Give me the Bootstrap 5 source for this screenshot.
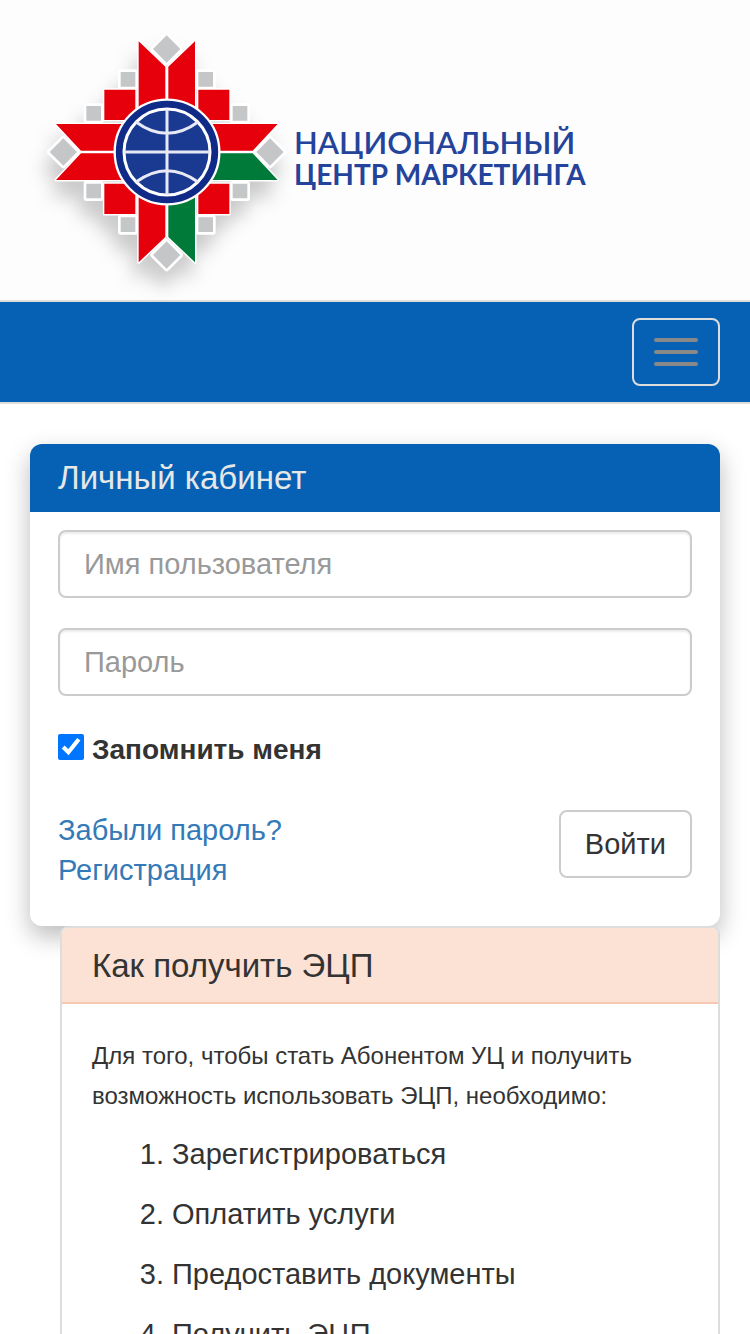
<!DOCTYPE html>
<html lang="ru">
<head>
<meta charset="utf-8">
<meta name="viewport" content="width=device-width, initial-scale=1">
<title>Личный кабинет</title>
<link rel="stylesheet" href="https://cdn.jsdelivr.net/npm/bootstrap@5.3.0/dist/css/bootstrap.min.css">
<style>
body{font-family:"Liberation Sans",Arial,sans-serif;font-size:29px;line-height:40px;color:#333;background:#fff}
a{color:#337ab7;text-decoration:none}
.site-head{background:#fdfdfd;padding:20px 30px 0}
.emblem{width:264px;height:280px;overflow:visible;filter:drop-shadow(-4px 16px 9px rgba(0,0,0,.2))}
.brand-words{font-family:Lato,sans-serif;font-weight:700;font-size:28px;line-height:32px;color:#24449b;margin-top:-4px}
.brand-words .first-line{font-size:31px;font-weight:600}
.site-nav{background:#0661b4;border:solid #ddd;border-width:2px 0;padding:16px 30px}
.site-nav .navbar-toggler{width:88px;height:68px;border:2px solid #ddd;border-radius:8px;padding:0 20px;gap:8px}
.bar{height:4px;border-radius:2px;background:#888}
.main-area{padding:40px 30px 0}
.login{border:0;border-radius:12px;box-shadow:0 10px 24px rgba(0,0,0,.27)}
.login .card-header{background:#0661b4;color:#e7e7e7;border:0;border-radius:12px 12px 0 0;padding:14px 28px}
.title{font-size:33px;line-height:40px;font-weight:400;margin:0}
.login .card-body{padding:18px 28px 36px}
.login .form-control{height:68px;padding:12px 24px;border:2px solid #ccc;border-radius:8px;font-size:29px;line-height:40px;margin-bottom:30px;box-shadow:inset 0 2px 2px rgba(0,0,0,.075)}
.login .form-control::placeholder{color:#999}
.tick{width:26px;height:26px;margin:0 8px 6px 0;accent-color:#0075ff}
.remember{padding:4px 0 40px;font-size:28px}
.enter{height:68px;border:2px solid #ccc;border-radius:8px;padding:0 24px;font-size:29px;line-height:40px;color:#333;background:#fff}
.howto{margin-left:30px;border:2px solid #ddd;border-radius:8px}
.howto .card-header{background:#fce1d5;border-bottom:2px solid #f8c7b2;border-radius:6px 6px 0 0;padding:18px 30px 16px}
.howto .card-body{padding:32px 30px}
.howto p{font-size:24px;margin-bottom:18px}
.howto ol{padding-left:80px}
.howto li{margin-bottom:20px}
</style>
</head>
<body>
<header class="site-head d-flex align-items-start">
  <svg class="emblem flex-shrink-0" viewBox="0 0 792 840" aria-hidden="true">
    <g stroke="#fff" stroke-width="9" stroke-linejoin="round" paint-order="stroke">
      <g fill="#c4c6c8" stroke-width="16">
        <path d="M410 46l41 41-41 41-41-41zM410 664l41 41-41 41-41-41zM100 355l41 41-41 41-41-41zM720 355l41 41-41 41-41-41z"/>
        <path d="M272 156h44v44h-44zM505 156h44v44h-44zM169 258h44v44h-44zM608 258h44v44h-44zM169 491h44v44h-44zM608 491h44v44h-44zM272 592h44v44h-44zM505 592h44v44h-44z"/>
      </g>
      <g fill="#e5000b">
        <path d="M223 209h93v91h-93zM505 209h93v91h-93zM223 491h93v91h-93zM505 491h93v91h-93z"/>
        <path d="M326 64l80 76v200h-80zM495 64l-80 76v200h80zM326 727l80-76V450h-80z"/>
        <path d="M78 312h250v80H153zM78 480h250v-80H153zM743 312H495v80h173z"/>
        <path fill="#007a38" d="M743 480H495v-80h173zM495 727l-80-76V450h80z"/>
      </g>
    </g>
    <circle cx="411" cy="396" r="157" fill="#102b87" stroke="#fff" stroke-width="7"/>
    <circle cx="411" cy="396" r="129" fill="#1a3a92" stroke="#fff" stroke-width="9"/>
    <path d="M411 267v258M282 396h258M318 306q93 68 186 0M318 486q93-68 186 0" fill="none" stroke="#e7eaf5" stroke-width="9"/>
  </svg>
  <div class="brand-words align-self-center text-nowrap"><div class="first-line">НАЦИОНАЛЬНЫЙ</div><div>ЦЕНТР МАРКЕТИНГА</div></div>
</header>
<nav class="site-nav d-flex justify-content-end">
  <button class="navbar-toggler d-flex flex-column justify-content-center align-items-stretch" type="button" aria-label="Меню"><span class="bar"></span><span class="bar"></span><span class="bar"></span></button>
</nav>
<main class="main-area">
  <section class="login card">
    <div class="card-header"><h1 class="title">Личный кабинет</h1></div>
    <form class="card-body">
      <input class="form-control" type="text" placeholder="Имя пользователя" aria-label="Имя пользователя">
      <input class="form-control" type="password" placeholder="Пароль" aria-label="Пароль">
      <div class="remember d-flex align-items-center">
        <input class="tick" type="checkbox" id="remember" checked>
        <label class="fw-bold" for="remember">Запомнить меня</label>
      </div>
      <div class="d-flex justify-content-between align-items-start">
        <div><a href="#">Забыли пароль?</a><br><a href="#">Регистрация</a></div>
        <button class="btn enter" type="submit">Войти</button>
      </div>
    </form>
  </section>
  <section class="howto card">
    <div class="card-header"><h2 class="title">Как получить ЭЦП</h2></div>
    <div class="card-body">
      <p>Для того, чтобы стать Абонентом УЦ и получить возможность использовать ЭЦП, необходимо:</p>
      <ol>
        <li>Зарегистрироваться</li>
        <li>Оплатить услуги</li>
        <li>Предоставить документы</li>
        <li>Получить ЭЦП</li>
      </ol>
    </div>
  </section>
</main>
<script src="https://cdn.jsdelivr.net/npm/bootstrap@5.3.0/dist/js/bootstrap.bundle.min.js"></script>
</body>
</html>
